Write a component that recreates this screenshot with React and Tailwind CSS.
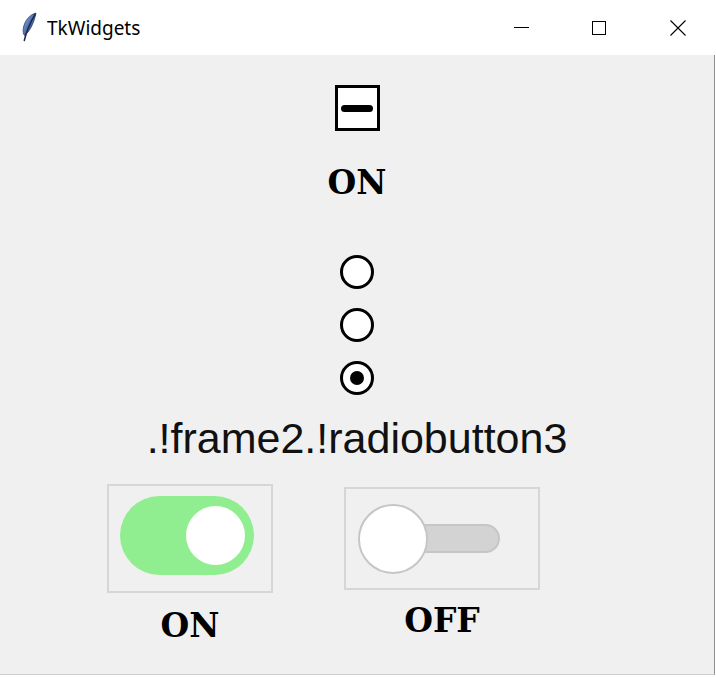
import React from "react";

function Feather() {
  return (
    <svg width="18" height="30" viewBox="0 0 18 30">
      <defs>
        <linearGradient id="fg" x1="0" y1="0" x2="1" y2="1">
          <stop offset="0" stopColor="#a9bde2" />
          <stop offset="0.45" stopColor="#5576bb" />
          <stop offset="1" stopColor="#243a6e" />
        </linearGradient>
      </defs>
      <path d="M16 1 C 10 2.5, 4.5 8.5, 3.3 16.5 C 2.9 19.5, 3.3 22, 4.5 23.5 C 9 20, 13.5 13, 16 1 Z" fill="url(#fg)" stroke="#2a3d6b" strokeWidth="0.8" />
      <path d="M15 2.5 C 10.5 10, 7 17, 4.3 28.5" stroke="#1e2a44" strokeWidth="1.5" fill="none" strokeLinecap="round" />
    </svg>
  );
}

export default function App() {
  const serif = { fontFamily: '"DejaVu Serif", "Liberation Serif", serif' };
  return (
    <div className="w-[716px] h-[677px] bg-white overflow-hidden flex flex-col">
      {/* Title bar */}
      <div className="h-[55px] bg-white flex items-center relative shrink-0">
        <div className="ml-[20px] mt-[-1px] flex items-center">
          <Feather />
        </div>
        <div
          className="ml-[9px] mt-[1px] text-[19px] text-black"
          style={{ fontFamily: '"Noto Sans", "Open Sans", sans-serif' }}
        >
          TkWidgets
        </div>
        <div className="ml-auto flex items-center h-full">
          <div className="w-[78px] h-full flex items-center justify-center">
            <div className="w-[15px] h-px bg-black" />
          </div>
          <div className="w-[78px] h-full flex items-center justify-center">
            <div className="w-[14px] h-[14px] border border-black" />
          </div>
          <div className="w-[78px] h-full flex items-center justify-center pl-[2px]">
            <svg width="16" height="16" viewBox="0 0 16 16">
              <path d="M0.5 0.5 L15.5 15.5 M15.5 0.5 L0.5 15.5" stroke="#000" strokeWidth="1.1" />
            </svg>
          </div>
        </div>
      </div>

      {/* Content */}
      <div className="w-[715px] h-[620px] bg-[#f0f0f0] border-r border-[#8f8f8f] border-b border-b-[#cfcfcf] flex flex-col items-center shrink-0">
        {/* checkbox */}
        <div className="mt-[30px] w-[45px] h-[46px] border-[3px] border-black bg-white flex items-center justify-center">
          <div className="w-[32px] h-[7px] rounded-full bg-black" />
        </div>
        <div className="mt-[37px] h-[30px] flex items-center text-[33px] font-bold text-black" style={serif}>
          ON
        </div>

        {/* radios */}
        <div className="mt-[57px] flex flex-col gap-[19px]">
          <div className="w-[34px] h-[34px] rounded-full border-[3px] border-black bg-white" />
          <div className="w-[34px] h-[34px] rounded-full border-[3px] border-black bg-white" />
          <div className="w-[34px] h-[34px] rounded-full border-[3px] border-black bg-white flex items-center justify-center">
            <div className="w-[14px] h-[14px] rounded-full bg-black" />
          </div>
        </div>

        <div
          className="mt-[19px] h-[48px] leading-[48px] text-[43px] text-[#111]"
          style={{ fontFamily: '"Liberation Sans", Arial, sans-serif' }}
        >
          .!frame2.!radiobutton3
        </div>

        {/* toggles */}
        <div className="self-start ml-[107px] mt-[22px] flex items-start">
          <div className="flex flex-col items-center">
            <div className="w-[166px] h-[109px] border-2 border-[#d6d6d6] pl-[11px] pt-[10px]">
              <div className="w-[134px] h-[79px] rounded-full bg-[#90ee90] flex items-center justify-end pr-[9px]">
                <div className="w-[59px] h-[59px] rounded-full bg-white" />
              </div>
            </div>
            <div className="mt-[18px] h-[30px] flex items-center text-[33px] font-bold text-black" style={serif}>
              ON
            </div>
          </div>

          <div className="ml-[71px] mt-[3px] flex flex-col items-center">
            <div className="w-[196px] h-[103px] border-2 border-[#d6d6d6] pl-[12px] flex items-center">
              <div className="relative z-10 w-[70px] h-[70px] rounded-full bg-white border-2 border-[#c6c6c6]" />
              <div className="ml-[-30px] w-[102px] h-[29px] rounded-r-full bg-[#d3d3d3] border-2 border-[#c6c6c6]" />
            </div>
            <div className="mt-[16px] h-[30px] flex items-center text-[33px] font-bold text-black" style={serif}>
              OFF
            </div>
          </div>
        </div>
      </div>
      <div className="h-[2px] bg-white" />
    </div>
  );
}
